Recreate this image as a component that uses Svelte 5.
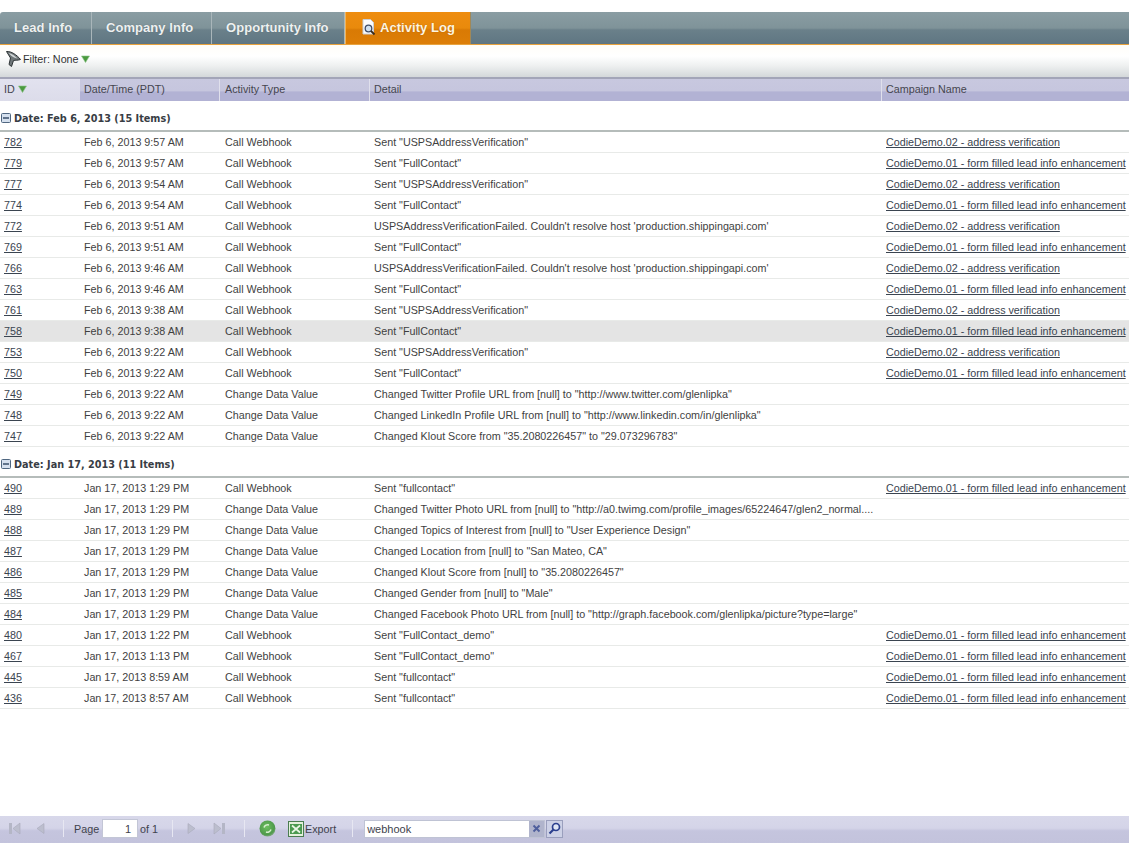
<script>
const wh = 'Call Webhook', cd = 'Change Data Value';
const c2 = 'CodieDemo.02 - address verification', c1 = 'CodieDemo.01 - form filled lead info enhancement';
const fail = "USPSAddressVerificationFailed. Couldn't resolve host 'production.shippingapi.com'";
const usps = 'Sent "USPSAddressVerification"', fc = 'Sent "FullContact"';
const groups = [
  { title: 'Date: Feb 6, 2013 (15 Items)', rows: [
    ['782','Feb 6, 2013 9:57 AM',wh,usps,c2],
    ['779','Feb 6, 2013 9:57 AM',wh,fc,c1],
    ['777','Feb 6, 2013 9:54 AM',wh,usps,c2],
    ['774','Feb 6, 2013 9:54 AM',wh,fc,c1],
    ['772','Feb 6, 2013 9:51 AM',wh,fail,c2],
    ['769','Feb 6, 2013 9:51 AM',wh,fc,c1],
    ['766','Feb 6, 2013 9:46 AM',wh,fail,c2],
    ['763','Feb 6, 2013 9:46 AM',wh,fc,c1],
    ['761','Feb 6, 2013 9:38 AM',wh,usps,c2],
    ['758','Feb 6, 2013 9:38 AM',wh,fc,c1],
    ['753','Feb 6, 2013 9:22 AM',wh,usps,c2],
    ['750','Feb 6, 2013 9:22 AM',wh,fc,c1],
    ['749','Feb 6, 2013 9:22 AM',cd,'Changed Twitter Profile URL from [null] to "http://www.twitter.com/glenlipka"',''],
    ['748','Feb 6, 2013 9:22 AM',cd,'Changed LinkedIn Profile URL from [null] to "http://www.linkedin.com/in/glenlipka"',''],
    ['747','Feb 6, 2013 9:22 AM',cd,'Changed Klout Score from "35.2080226457" to "29.073296783"',''],
  ]},
  { title: 'Date: Jan 17, 2013 (11 Items)', rows: [
    ['490','Jan 17, 2013 1:29 PM',wh,'Sent "fullcontact"',c1],
    ['489','Jan 17, 2013 1:29 PM',cd,'Changed Twitter Photo URL from [null] to "http://a0.twimg.com/profile_images/65224647/glen2_normal....',''],
    ['488','Jan 17, 2013 1:29 PM',cd,'Changed Topics of Interest from [null] to "User Experience Design"',''],
    ['487','Jan 17, 2013 1:29 PM',cd,'Changed Location from [null] to "San Mateo, CA"',''],
    ['486','Jan 17, 2013 1:29 PM',cd,'Changed Klout Score from [null] to "35.2080226457"',''],
    ['485','Jan 17, 2013 1:29 PM',cd,'Changed Gender from [null] to "Male"',''],
    ['484','Jan 17, 2013 1:29 PM',cd,'Changed Facebook Photo URL from [null] to "http://graph.facebook.com/glenlipka/picture?type=large"',''],
    ['480','Jan 17, 2013 1:22 PM',wh,'Sent "FullContact_demo"',c1],
    ['467','Jan 17, 2013 1:13 PM',wh,'Sent "FullContact_demo"',c1],
    ['445','Jan 17, 2013 8:59 AM',wh,'Sent "fullcontact"',c1],
    ['436','Jan 17, 2013 8:57 AM',wh,'Sent "fullcontact"',c1],
  ]},
];
</script>

<div class="page">
  <nav class="tabs">
    <div class="tab t1">Lead Info</div>
    <div class="tab t2">Company Info</div>
    <div class="tab t3">Opportunity Info</div>
    <div class="tab active">
      <svg width="15" height="17" viewBox="0 0 15 17">
        <path d="M1 .5h7.500l3 3V15H1z" fill="#fbfcfd" stroke="#c9ced6"/>
        <circle cx="6.500" cy="9.500" r="3.300" fill="#cfe0f0" stroke="#3f4d68" stroke-width="1.300"/>
        <path d="M9 12l3.500 3.500" stroke="#3a2a1a" stroke-width="1.800"/>
      </svg>
      <span>Activity Log</span>
    </div>
  </nav>

  <div class="filter">
    <svg width="17" height="18" viewBox="0 0 17 18">
      <path d="M1.500 1.500C6 1 12 5 15.500 9.500 13 10.500 10.500 10 8.500 10.500L6.500 16.500 4 14.500 5.500 8z" fill="#6f7779" stroke="#2e3436"/>
      <path d="M3.500 3C7 3.500 10 6 12.500 8.500 10 8 8 7 6.500 6z" fill="#d3d8d9"/>
    </svg>
    <span>Filter: None</span>
    <svg class="tri" width="9" height="8" viewBox="0 0 9 8"><path d="M.5 1h8L4.500 7.500z" fill="#4b9a3f" stroke="#8cc388" stroke-width=".6"/></svg>
  </div>

  <div class="head">
    <div class="th sorted">ID
      <svg class="tri" width="9" height="8" viewBox="0 0 9 8"><path d="M.5 1h8L4.500 7.500z" fill="#4b9a3f" stroke="#8cc388" stroke-width=".6"/></svg>
      <span class="grip"></span>
    </div>
    <div class="th">Date/Time (PDT)</div>
    <div class="th ty">Activity Type</div>
    <div class="th">Detail</div>
    <div class="th">Campaign Name</div>
  </div>

  <main class="body">
    {#each groups as g}
      <div class="group">
        <svg width="10" height="10" viewBox="0 0 10 10"><rect x=".5" y=".5" width="9" height="9" rx="1" fill="#d5e0ee" stroke="#4f6680"/><path d="M2 5h6" stroke="#2f4460" stroke-width="1.400"/></svg>
        <span>{g.title}</span>
      </div>
      {#each g.rows as r}
        <div class="row" class:sel={r[0] === '758'}>
          <div class="td"><a href="#{r[0]}">{r[0]}</a></div>
          <div class="td">{r[1]}</div>
          <div class="td ty">{r[2]}</div>
          <div class="td">{r[3]}</div>
          <div class="td">{#if r[4]}<a href="#{r[0]}">{r[4]}</a>{/if}</div>
        </div>
      {/each}
    {/each}
  </main>

  <footer class="pager">
    <svg class="nav" width="13" height="13" viewBox="0 0 13 13"><path d="M1 1h3v11H1z" fill="#b4b6c6"/><path d="M12 1L5 6.500l7 5.500z" fill="#bcbece" stroke="#a8aabb" stroke-width=".6"/></svg>
    <svg class="nav n2" width="9" height="13" viewBox="0 0 9 13"><path d="M8 1.500L1 6.500l7 5z" fill="#bcbece" stroke="#a8aabb" stroke-width=".6"/></svg>
    <i class="sep s1"></i>
    <span class="lbl">Page</span>
    <span class="pageinput">1</span>
    <span class="lbl">of 1</span>
    <i class="sep s2"></i>
    <svg class="nav n3" width="9" height="13" viewBox="0 0 9 13"><path d="M1 1.500l7 5-7 5z" fill="#bcbece" stroke="#a8aabb" stroke-width=".6"/></svg>
    <svg class="nav n4" width="13" height="13" viewBox="0 0 13 13"><path d="M9 1h3v11H9z" fill="#b4b6c6"/><path d="M1 1l7 5.500L1 12z" fill="#bcbece" stroke="#a8aabb" stroke-width=".6"/></svg>
    <i class="sep s3"></i>
    <svg class="refresh" width="17" height="17" viewBox="0 0 17 17">
      <defs><radialGradient id="gb" cx=".45" cy=".4" r=".65"><stop offset="0" stop-color="#6dc060"/><stop offset=".75" stop-color="#4f9a4c"/><stop offset="1" stop-color="#8fae90"/></radialGradient></defs>
      <circle cx="8.500" cy="8.500" r="8" fill="url(#gb)"/>
      <path d="M5 7.500a4 4 0 0 1 5-2.500M12 9.500a4 4 0 0 1-5 2.500" fill="none" stroke="#d7efd0" stroke-width="1.500"/>
    </svg>
    <svg class="xl" width="16" height="16" viewBox="0 0 16 16">
      <rect x=".5" y=".5" width="15" height="15" fill="#e4f0dc" stroke="#4a7d50"/>
      <rect x="2" y="3" width="12" height="10" fill="#4b9a50"/>
      <path d="M4 4.500l8 7M12 4.500l-8 7" stroke="#eaf6e6" stroke-width="1.700"/>
    </svg>
    <span class="lbl exp">Export</span>
    <i class="sep s4"></i>
    <div class="search">
      <span class="q">webhook</span>
      <span class="clear"><svg width="9" height="9" viewBox="0 0 9 9"><path d="M1.500 1.500l6 6M7.500 1.500l-6 6" stroke="#4f5f9c" stroke-width="1.900"/></svg></span>
    </div>
    <span class="go"><svg width="13" height="13" viewBox="0 0 13 13"><circle cx="8" cy="5" r="3.500" fill="#dfe6f5" stroke="#2b3f8e" stroke-width="1.700"/><path d="M5.500 7.500L1.500 11.500" stroke="#2b3f8e" stroke-width="2.200"/></svg></span>
  </footer>
</div>

<style>
  :global(body) { margin: 0; background: #fff; }
  .page {
    width: 1129px; height: 843px; overflow: hidden;
    display: flex; flex-direction: column;
    font: 10.75px "Liberation Sans", Arial, sans-serif; color: #3f3f3f;
    padding-top: 12px; box-sizing: border-box;
  }
  .tabs {
    display: flex; flex: none; height: 33px; box-sizing: border-box;
    border-bottom: 1px solid #e8a23c;
    border-top-left-radius: 3px;
    background: linear-gradient(#8a9da3 0, #7f9399 50%, #6a808a 56%, #5f7682 100%);
  }
  .tab {
    display: flex; align-items: center; gap: 3px; padding: 0 0 2px 14px;
    font: bold 13px "Liberation Sans", Arial, sans-serif; letter-spacing: .05px; color: #eef1f1;
    border-right: 1px solid #a9b6ba; box-sizing: border-box;
    text-shadow: 0 0 1px #56666d;
  }
  .t1 { width: 92px; }
  .t2 { width: 120px; }
  .t3 { width: 133px; }
  .active {
    width: 126px; color: #fff5e0; border-right: 1px solid #a08858; border-left: 1px solid #f2b45a;
    padding-left: 16px;
    background: linear-gradient(#ee8d10 0, #e98a0c 50%, #d97a04 56%, #dd7e06 100%);
    text-shadow: 0 0 1px #a85a00;
  }
  .active svg { margin-top: 1px; }
  .filter {
    flex: none; height: 32px; box-sizing: border-box; padding: 0 0 4px 5px;
    display: flex; align-items: center; gap: 1px; color: #333;
    background: linear-gradient(#fffdf8 0, #fff 35%, #eef0f0 65%, #d4d8da 100%);
  }
  .filter .tri { margin-left: 1px; margin-top: -1px; }
  .head {
    flex: none; height: 24px; box-sizing: border-box; padding-bottom: 2px;
    display: grid; grid-template-columns: 80px 140px 150px 512px 1fr;
    border-top: 2px solid #a3a5b8;
    background: linear-gradient(#c8c8df 0, #c6c6de 55%, #b2b2d4 58%, #b2b2d4 100%);
    color: #45454f;
  }
  .th {
    display: flex; align-items: center; padding-left: 4px; gap: 3px;
    border-right: 1px solid #e0e0ec; box-sizing: border-box; position: relative;
    margin-bottom: -2px; padding-bottom: 2px;
  }
  .th.ty, .td.ty { padding-left: 5px; }
  .th:last-child { border-right: 0; }
  .sorted { background: linear-gradient(#e2e2ef, #dcdcea); border-right: 0; }
  .grip {
    position: absolute; right: 3px; top: 1px; width: 6px; height: 6px;
    background-image: radial-gradient(#8a8a9c 45%, transparent 50%);
    background-size: 2px 2px;
  }
  .body { flex: 1; min-height: 0; }
  .group {
    height: 31px; box-sizing: border-box; border-bottom: 2px solid #b5bcba;
    display: flex; align-items: center; gap: 3px; padding: 6px 0 0 1px;
    font: bold 9.7px "DejaVu Sans", Verdana, sans-serif; color: #383d44;
  }
  .group svg { margin-top: -2px; }
  .row {
    height: 21px; box-sizing: border-box; border-bottom: 1px solid #e8eae8;
    display: grid; grid-template-columns: 80px 140px 150px 512px 1fr;
    align-items: center;
  }
  .row.sel { background: #e4e4e4; }
  .td { padding-left: 4px; white-space: nowrap; overflow: hidden; padding-bottom: 1px; }
  a { color: #3a4450; text-decoration: underline; }
  .pager {
    flex: none; height: 27px; box-sizing: border-box;
    display: flex; align-items: center; padding: 0 0 2px 8px;
    background: linear-gradient(#d8d8ea 0, #d4d4e8 45%, #c5c5de 55%, #c3c3dc 100%);
    color: #40424c;
  }
  .nav { flex: none; }
  .n2 { margin-left: 15px; }
  .sep { width: 1px; height: 17px; background: #e7e7f2; flex: none; }
  .s1 { margin-left: 18px; margin-right: 10px; }
  .s2 { margin-left: 14px; }
  .n3 { margin-left: 14px; }
  .n4 { margin-left: 17px; }
  .s3 { margin-left: 18px; }
  .lbl { white-space: nowrap; }
  .pageinput {
    width: 36px; height: 19px; box-sizing: border-box; background: #fff; border: 1px solid #c3c6d6;
    margin: 0 2px 0 3px; text-align: right; padding-right: 6px; line-height: 18px; font-size: 11px;
  }
  .refresh { margin-left: 14px; flex: none; }
  .xl { margin-left: 12px; flex: none; }
  .exp { margin-left: 1px; }
  .s4 { margin-left: 16px; }
  .search {
    margin-left: 11px; width: 181px; height: 18px; box-sizing: border-box;
    background: #fff; border: 1px solid #bfc3d4; display: flex; align-items: center; position: relative;
  }
  .q { padding-left: 2px; font-size: 11px; }
  .clear {
    position: absolute; right: 0; top: 0; width: 15px; height: 16px;
    background: #b0b4cc; display: flex; align-items: center; justify-content: center;
  }
  .go {
    width: 17px; height: 18px; background: #cdd1e6; border: 1px solid #9a9fbd; box-sizing: border-box;
    display: flex; align-items: center; justify-content: center; margin-left: 1px;
  }
</style>
